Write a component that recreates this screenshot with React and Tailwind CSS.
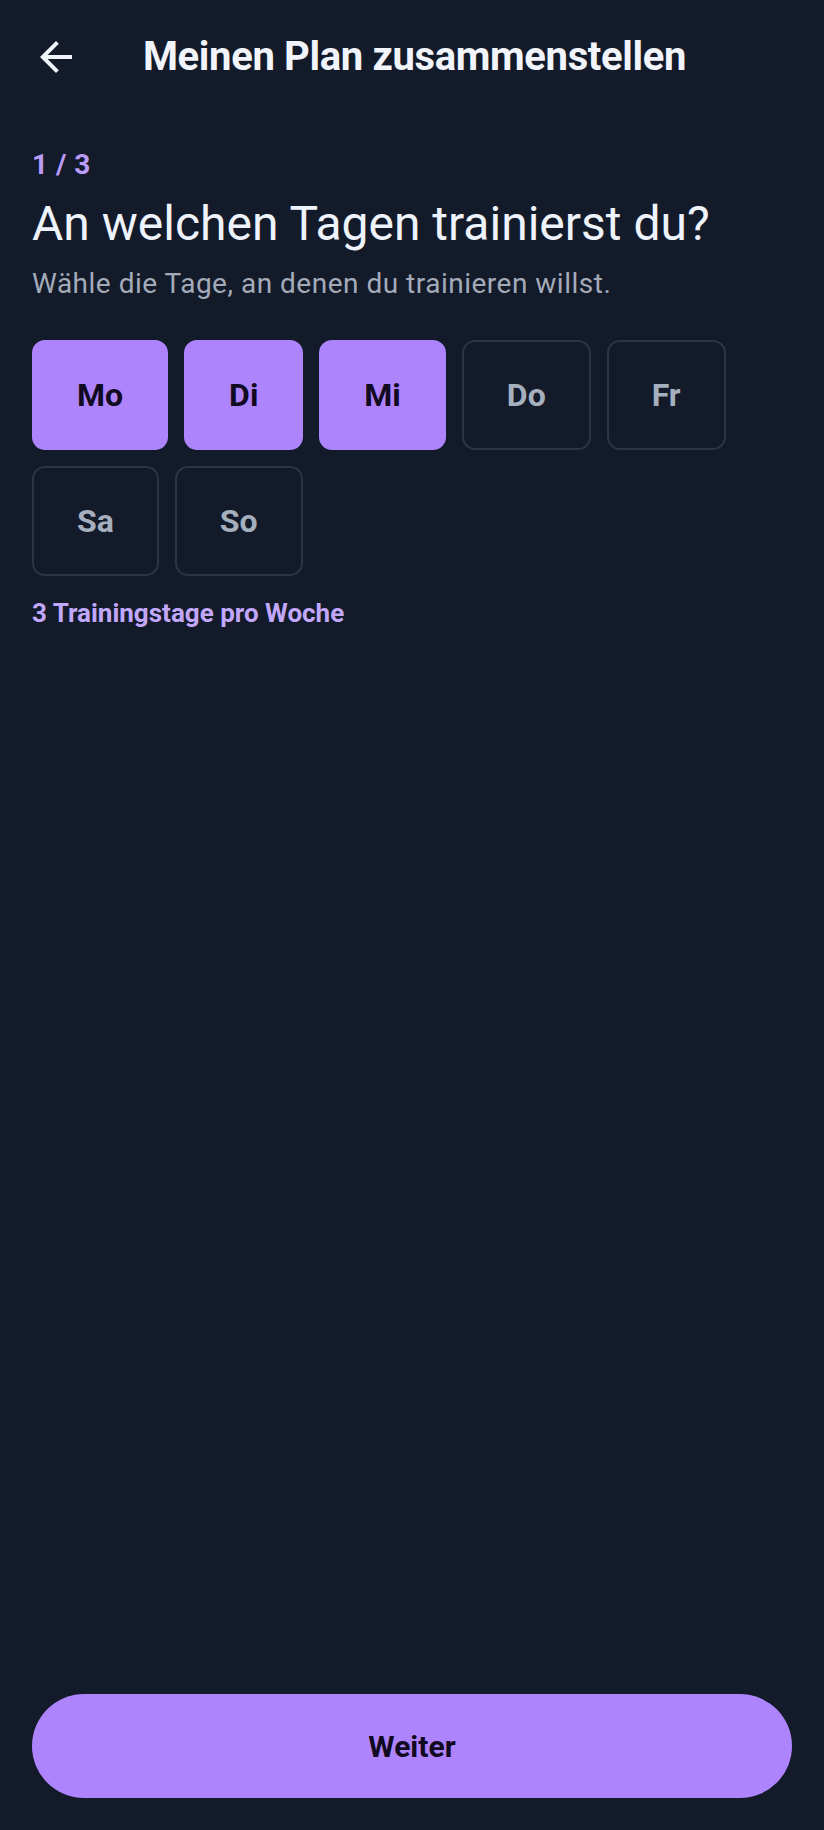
import { useState } from "react";

const TAGE = ["Mo", "Di", "Mi", "Do", "Fr", "Sa", "So"];

function ZurueckPfeil() {
  return (
    <svg width="48" height="48" viewBox="0 0 24 24" fill="currentColor" aria-hidden="true">
      <path d="M20 11H7.83l5.59-5.59L12 4l-8 8 8 8 1.41-1.41L7.83 13H20v-2z" />
    </svg>
  );
}

export default function App() {
  const [auswahl, setAuswahl] = useState(["Mo", "Di", "Mi"]);

  const umschalten = (tag) => {
    setAuswahl((aktuell) =>
      aktuell.includes(tag) ? aktuell.filter((t) => t !== tag) : [...aktuell, tag]
    );
  };

  return (
    <main
      className="flex min-h-screen flex-col bg-[#131a29] text-[#eef2fa]"
      style={{ fontFamily: "Roboto, 'Noto Sans', sans-serif" }}
    >
      <header className="flex items-center px-8 pt-[33px]">
        <button type="button" className="flex h-12 w-12 items-center justify-center text-[#f1f4fb]">
          <ZurueckPfeil />
        </button>
        <h1 className="ml-[5px] flex-1 text-center text-[40px] font-bold leading-[48px] tracking-[-0.35px] text-[#f1f4fb]">
          Meinen Plan zusammenstellen
        </h1>
        <div className="w-12" />
      </header>

      <section className="flex-1 px-8 pt-[68px]">
        <p className="text-[28px] font-bold leading-[32px] tracking-[0.5px] text-[#b99cf8]">1 / 3</p>
        <h2 className="mt-[15px] text-[48px] font-normal leading-[56px] text-[#eef2fb]">
          An welchen Tagen trainierst du?
        </h2>
        <p className="mt-4 text-[28px] leading-[32px] tracking-[0.5px] text-[#a3abb9]">
          Wähle die Tage, an denen du trainieren willst.
        </p>

        <div className="mt-10 flex flex-wrap gap-4">
          {TAGE.map((tag) => {
            const aktiv = auswahl.includes(tag);
            return (
              <button
                type="button"
                key={tag}
                onClick={() => umschalten(tag)}
                className={
                  aktiv
                    ? "flex h-[110px] items-center justify-center rounded-[13px] border-2 border-[#ae84fd] bg-[#ae84fd] px-[43px] text-[32px] font-bold text-[#110a20]"
                    : "flex h-[110px] items-center justify-center rounded-[13px] border-2 border-[#2d3444] bg-transparent px-[43px] text-[32px] font-bold text-[#a6afbe]"
                }
              >
                {tag}
              </button>
            );
          })}
        </div>

        <p className="mt-[22px] text-[26px] font-bold leading-[30px] text-[#c2a8fb]">
          {auswahl.length} Trainingstage pro Woche
        </p>
      </section>

      <footer className="px-8 pb-8">
        <button
          type="button"
          className="flex h-[104px] w-full items-center justify-center rounded-full bg-[#ae84fd] text-[30px] font-bold text-[#110a20]"
        >
          Weiter
        </button>
      </footer>
    </main>
  );
}
